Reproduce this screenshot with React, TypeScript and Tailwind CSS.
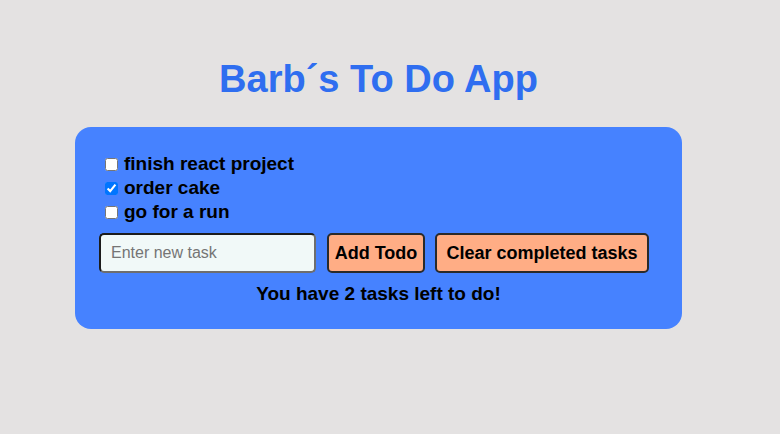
import React, { useState } from "react";

export default function App() {
  const [todos, setTodos] = useState([
    { id: 1, text: "finish react project", done: false },
    { id: 2, text: "order cake", done: true },
    { id: 3, text: "go for a run", done: false },
  ]);
  const left = todos.filter((t) => !t.done).length;
  return (
    <div className="min-h-[434px] w-[780px] bg-[#e4e2e2] font-['Liberation_Sans',Arial,sans-serif] pt-[56px]">
      <h1 className="ml-[75px] w-[607px] text-center text-[38px] font-bold leading-[46px] text-[#2f6ef0]">
        Barb´s To Do App
      </h1>
      <div className="ml-[75px] mt-[25px] w-[607px] h-[202px] rounded-[16px] bg-[#4682ff] pl-[24px] pt-[25px]">
        <ul className="flex flex-col">
          {todos.map((t) => (
            <li key={t.id} className="flex items-center h-[24px] text-[19px] font-bold text-black leading-[24px]">
              <input
                type="checkbox"
                checked={t.done}
                onChange={() =>
                  setTodos(todos.map((x) => (x.id === t.id ? { ...x, done: !x.done } : x)))
                }
                className="ml-[6px] mr-[6px] w-[13px] h-[13px]"
              />
              <span>{t.text}</span>
            </li>
          ))}
        </ul>
        <div className="flex items-center mt-[9px]">
          <input
            placeholder="Enter new task"
            className="w-[217px] h-[40px] rounded-[5px] border-2 border-t-[#1c1c1c] border-l-[#1c1c1c] border-b-[#6e6e6e] border-r-[#6e6e6e] bg-[#f1f9f8] px-[10px] text-[16px] placeholder:text-[#757575] outline-none"
          />
          <button className="ml-[11px] h-[40px] w-[98px] rounded-[5px] border-2 border-[#2a2a2a] bg-[#ffad85] text-[18px] font-bold text-black">
            Add Todo
          </button>
          <button className="ml-[10px] h-[40px] w-[214px] rounded-[5px] border-2 border-[#2a2a2a] bg-[#ffad85] text-[18px] font-bold text-black">
            Clear completed tasks
          </button>
        </div>
        <p className="mt-[10px] w-[559px] text-center text-[19px] font-bold leading-[22px] text-black">
          You have {left} tasks left to do!
        </p>
      </div>
    </div>
  );
}
